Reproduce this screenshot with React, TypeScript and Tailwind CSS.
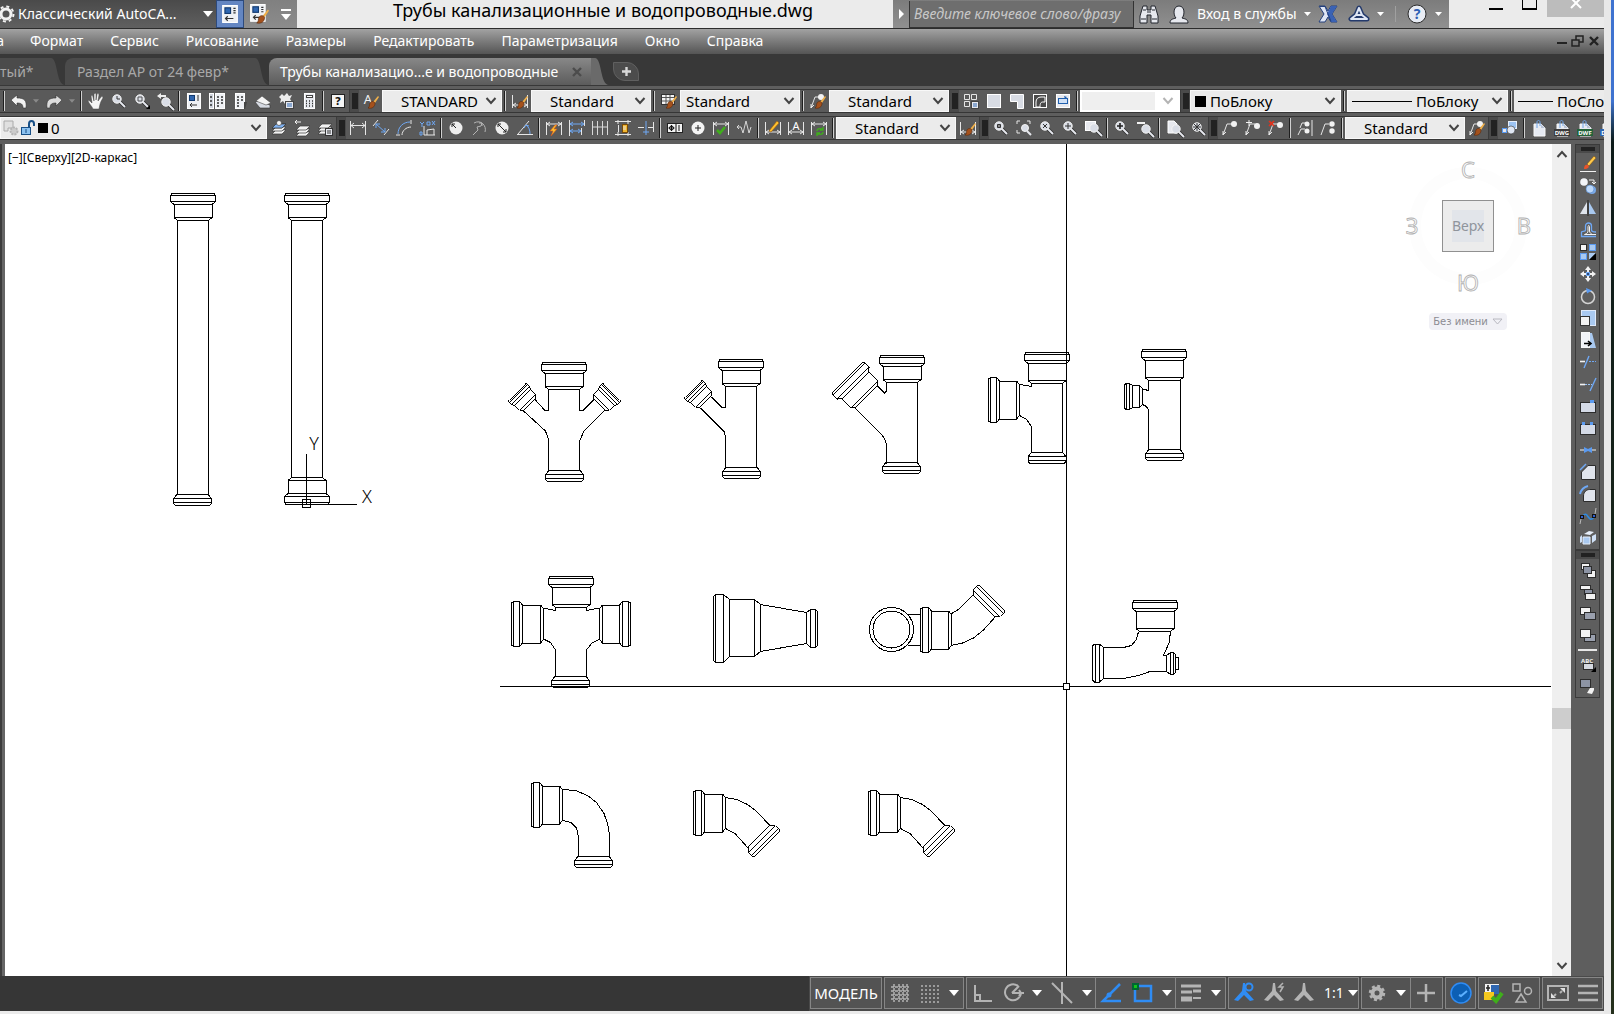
import type { ReactNode } from "react";
import { clsx } from "clsx";

/* ---------- shared icon pieces, all on a 16x16 grid ---------- */

const Lens = ({ x = 6, y = 6 }: { x?: number; y?: number }) => (
    <g>
        <path d={`M${x + 3} ${y + 3}l5 5`} stroke="#2b2b2b" strokeWidth="3.4" />
        <path d={`M${x + 3} ${y + 3}l5 5`} stroke="#e6e8ee" strokeWidth="2" />
        <circle cx={x} cy={y} r="4.2" fill="#d9dde6" stroke="#f4f4f4" />
    </g>
);

const Brush = () => (
    <g>
        <path d="M10 9l5-6 1 1-4 6z" fill="#f0b04a" />
        <path d="M7 10c1-2 4-2 5 0 0 4-3 6-7 5 2-1 1-3 2-5z" fill="#a4511c" stroke="#5c2a0c" strokeWidth="0.6" />
    </g>
);

const Dim = ({ y = 11 }: { y?: number }) => (
    <path d={`M.5 2v13M15.5 2v13M1 ${y}h14M4 ${y - 2}l-3 2 3 2M12 ${y - 2}l3 2-3 2`} stroke="#e6e6e6" fill="none" />
);

const Leader = () => (
    <path d="M1 15l4-11h5M1 15l0-4M1 15l3-3" stroke="#e6e6e6" fill="none" />
);

const Sheet = ({ label, c = "#3c3c3c" }: { label?: string; c?: string }) => (
    <g>
        <path d="M3 4h7l4 4v8H3z" fill="#e6eaf2" stroke="#f8f8f8" />
        <path d="M10 4v4h4" fill="#b9c3d6" />
        <path d="M6 8V2c0-2 3-2 3 0v4" stroke="#6fa4e8" fill="none" />
        {label && <rect x="0" y="9" width="16" height="7" fill={c} />}
        {label && <text x="8" y="15" fontSize="6" fontWeight="700" textAnchor="middle" fill="#fff">{label}</text>}
    </g>
);

const Stack = () => (
    <g fill="#f2f2f2" stroke="#3a3a3a" strokeWidth="0.7">
        <path d="M1 14l4-4h10l-4 4z" />
        <path d="M1 11l4-4h10l-4 4z" />
        <path d="M1 8l4-4h10l-4 4z" />
    </g>
);

const box = (x: number, y: number, w: number, h: number, fill = "#e4e8f0", stroke = "#2c2c2c") => (
    <rect x={x} y={y} width={w} height={h} fill={fill} stroke={stroke} />
);

const icons: Record<string, ReactNode> = {
    undo: <path d="M0 7l6-5v3c7 0 10 2 9 10h-3c0-4-2-5-6-5v3z" fill="#f2f2f2" stroke="#333" strokeWidth="0.6" />,
    redo: <path d="M16 7l-6-5v3C3 5 0 7 1 15h3c0-4 2-5 6-5v3z" fill="#dcdcdc" stroke="#333" strokeWidth="0.6" />,
    hand: <path d="M5 16c-1-3-4-5-5-8 1-1 2 0 4 2L3 3c1-1 2 0 2 1l1 4V1c1-1 2-1 2 0v6l1-6c1-1 2 0 2 1l-1 6 3-4c1-1 2 0 2 1-2 3-3 5-4 11z" fill="#f4f4f4" stroke="#444" strokeWidth="0.5" />,
    zoomTime: <g><Lens /><path d="M6 3v3h3" stroke="#333" fill="none" /></g>,
    zoomWin: <g><Lens /><path d="M4 4h4v4H4z" fill="none" stroke="#555" /><path d="M16 12v4h-4z" fill="#000" /></g>,
    zoomPrev: <g><Lens x={9} y={9} /><path d="M0 3l4-3v2h5v2H4v2z" fill="#eee" /></g>,
    props: <g>{box(1.5, 0.5, 13, 15, "#eef0f4", "#fff")}{box(3.5, 2.5, 5, 5, "#2f66b0", "#123a70")}<path d="M11 3h2M11 5h2M11 7h2M4 12h7M6 10l-2 2 2 2" stroke="#333" fill="none" /></g>,
    design: <g>{box(0.5, 0.5, 4, 15, "#cfd4de", "#fff")}{box(6.5, 0.5, 9, 15, "#eef0f4", "#fff")}<path d="M1 4h2M1 8h2M1 12h2M8 4h2M12 4h2M8 7h2M12 7h2M8 10h2M12 10h2M8 13h2" stroke="#333" strokeWidth="1.6" /></g>,
    palettes: <g>{box(3.5, 0.5, 9, 15, "#eef0f4", "#fff")}<path d="M5 4h2M9 4h2M5 7h2M9 7h2M5 10h2M5 13h2" stroke="#333" strokeWidth="1.6" /><path d="M12 9h3l-2 7h-1z" fill="#444" /></g>,
    sheets: <g><path d="M0 9l4-1 11 4v3H5z" fill="#d6dae2" stroke="#333" strokeWidth="0.6" /><path d="M1 8l6-5 9 7-5 2z" fill="#f4f4f4" stroke="#444" strokeWidth="0.6" /></g>,
    markup: <g><path d="M1 4l3-3 2 2 3-3 2 3 3-1-2 4 2 3-4-1-3 3-2-3-3 2 1-4z" fill="#eee" />{box(7.5, 8.5, 8, 7, "#e6e8ee", "#444")}<path d="M9 11h5M9 13h5" stroke="#2f66b0" /></g>,
    calc: <g>{box(3.5, 0.5, 10, 15, "#e6e8ee", "#fff")}{box(5.5, 2.5, 6, 2, "#fff", "#444")}<path d="M5 8h1M8 8h1M11 8h1M5 10.500h1M8 10.500h1M11 10.500h1M5 13h1M8 13h1M11 13h1" stroke="#333" strokeWidth="1.400" /></g>,
    help: <g>{box(1.5, 1.5, 13, 13, "#f4f4f4", "#222")}<text x="8" y="12" fontSize="11" fontWeight="800" textAnchor="middle" fill="#111">?</text></g>,
    textStyle: <g><text x="5" y="11" fontSize="13" textAnchor="middle" fill="#f2f2f2">A</text><Brush /></g>,
    dimStyle: <g><Dim y={12} /><Brush /></g>,
    tableStyle: <g>{box(0.5, 1.5, 13, 10, "#f4f4f4", "#333")}<path d="M1 4.500h12M1 8h12M5 2v9M9 2v9" stroke="#555" /><Brush /></g>,
    leaderStyle: <g><Leader /><circle cx="11" cy="4" r="3" fill="#f2f2f2" /><Brush /></g>,
    vpGroup: <g fill="none" stroke="#e6e6e6"><path d="M1.500 1.500h5v5h-5zM8.500 1.500h5v5h-5zM1.500 8.500h5v5h-5z" />{box(8.5, 8.5, 7, 7, "#e6e8ee", "#444")}<path d="M10 11h4M10 13h4" stroke="#2f66b0" /></g>,
    vpOne: <g>{box(1.5, 1.5, 13, 13, "#d8dce4", "#fff")}</g>,
    vpPoly: <path d="M1.500 1.500h13v14h-6v-7h-7z" fill="#d8dce4" stroke="#fff" />,
    vpObj: <g>{box(1.5, 1.5, 13, 13, "#4a4a4a", "#fff")}<path d="M4 14V9c0-3 2-5 5-5h4v5h-2c-2 0-3 1-3 5z" fill="none" stroke="#fff" /></g>,
    vpClip: <g>{box(1.5, 1.5, 13, 13, "#e6e8ee", "#fff")}{box(3.5, 5.5, 9, 5, "#cfe0f6", "#1f5fae")}<path d="M9 3l3 1-2 2" fill="#1f5fae" /></g>,
    layerMake: <g><Stack /><path d="M1 8l4-4h10l-4 4z" fill="#7fb0ee" stroke="#333" strokeWidth="0.7" /><circle cx="8" cy="3" r="2.500" fill="#f4f4f4" stroke="#333" strokeWidth="0.6" /></g>,
    layerPrev: <g transform="translate(1 2)"><Stack /><path d="M0 0h6M2-2L0 0l2 2" stroke="#f2f2f2" fill="none" /></g>,
    layerState: <g><Stack />{box(8.5, 8.5, 7, 7, "#e6e8ee", "#333")}<path d="M10 11h4M10 13h4" stroke="#333" /></g>,
    dLin: <path d="M.5 1v14M15.500 1v14M1 5.500h14M4 3L1 5.500 4 8M12 3l3 2.500L12 8" stroke="#e6e6e6" fill="none" />,
    dAli: <g fill="none" stroke="#6fa8f4"><path d="M3 4l9 8M3 8V4h4M12 8v4H8" /><path d="M5 0L0 6M16 9l-5 6" stroke="#e6e6e6" /></g>,
    dArc: <g fill="none"><path d="M2 14C2 7 7 2 14 2" stroke="#6fa8f4" /><path d="M6 15c0-4 4-8 9-8M0 15h4M15 0v4" stroke="#e6e6e6" /></g>,
    dOrd: <g fill="none" stroke="#e6e6e6"><path d="M5 15V6M15 15V9L8 10v5M5 15h11" /><path d="M1 2l2 2 2-2M3 4v3M8 2h3v3H8zM13 1l3 4M16 1l-3 4M1 12h2v3H1z" stroke="#6fa8f4" /></g>,
    dRad: <g><circle cx="8" cy="8" r="6.500" fill="#eee" /><path d="M8 8L4 4M4 7V4h3" stroke="#222" fill="none" /></g>,
    dJog: <g fill="none" stroke="#b4b4b4"><path d="M3 3c7-4 13 3 11 9" /><path d="M2 15l5-5-1-3 4-1 1-3M8 3h3v3" /></g>,
    dDia: <g><circle cx="8" cy="8" r="6.500" fill="#eee" /><path d="M4 4l8 8M4 7V4h3M12 9v3H9" stroke="#222" fill="none" /></g>,
    dAng: <g fill="none"><path d="M0 14.500h16M1 14L12 1" stroke="#e6e6e6" /><path d="M9 5c3 2 4 5 4 9M7 8l2-3 3 1" stroke="#6fa8f4" /></g>,
    dQuick: <g><Dim y={4} /><path d="M9 5l-5 6h3l-2 5 6-7H8l3-4z" fill="#ffc12e" stroke="#d9541a" strokeWidth="0.6" /></g>,
    dBase: <g fill="none" stroke="#6fa8f4"><path d="M1 4h13M1 11h10M4 2L1 4l3 2M12 2l3 2-3 2M4 9l-3 2 3 2M9 9l3 2-3 2" /><path d="M.5 0v16M15.500 0v6M12.500 8v7" stroke="#e6e6e6" /></g>,
    dCont: <path d="M.5 1v14M5.500 1v14M10.500 1v14M15.500 1v14M1 7h15" stroke="#d8d8d8" fill="none" />,
    dSpace: <g><path d="M0 1.500h16M0 14.500h16M3 0v4M13 0v4M3 12v4M13 12v4" stroke="#e6e6e6" />{box(7.5, 4.5, 5, 8, "#f0b62e", "#7a4b08")}<path d="M3.500 5v7M8 7h3M8 9h3" stroke="#e6e6e6" /></g>,
    dBreak: <g fill="none"><path d="M0 7.500h6M10 7.500h6M15.500 2v10" stroke="#e6e6e6" /><path d="M8 1v14M5 12h6" stroke="#6fa8f4" /></g>,
    tol: <g>{box(0.5, 3.5, 15, 9, "#f4f4f4", "#222")}<circle cx="4.500" cy="8" r="2" fill="none" stroke="#111" /><path d="M1.500 8h6M4.500 5v6M9 4v8M12 5v6" stroke="#111" /></g>,
    center: <g><circle cx="8" cy="8" r="6.500" fill="#f4f4f4" /><path d="M5 8h6M8 5v6" stroke="#222" /></g>,
    inspect: <g><Dim y={4} /><path d="M4 10l3 3 5-6" stroke="#3fae1b" strokeWidth="2.600" fill="none" /></g>,
    jogLine: <path d="M1 7h4l2 6 3-12 3 12 2-6M3 5L1 7l2 2" stroke="#d8d8d8" fill="none" />,
    dEdit: <g><Dim y={12} /><path d="M4 11l8-10 2 2-8 9z" fill="#ffc12e" stroke="#a05a08" strokeWidth="0.6" /></g>,
    dText: <g><Dim y={12} /><text x="8" y="10" fontSize="11" textAnchor="middle" fill="#fff">A</text></g>,
    dUpd: <g><Dim y={4} /><path d="M6 11c0-3 5-3 6-1M12 12c0 3-5 3-6 1M12 7v3h-3M6 16v-3h3" stroke="#3fae1b" fill="none" strokeWidth="1.400" /></g>,
    zW: <g><Lens /><path d="M4.500 4.500h3v3h-3z" fill="#888" stroke="#333" /></g>,
    zDyn: <g><path d="M1 4V1h3M11 1h3v3M1 10v3h3" stroke="#e6e6e6" fill="none" /><circle cx="9" cy="8" r="3.500" fill="#d9dde6" stroke="#f4f4f4" /><path d="M11 11l4 4" stroke="#e6e8ee" strokeWidth="2" /></g>,
    zScale: <g><Lens /><path d="M4 4l4 4M8 4L4 8" stroke="#333" /></g>,
    zCen: <g><Lens /><path d="M3 6h6M6 3v6" stroke="#333" /></g>,
    zObj: <g>{box(0.5, 1.5, 10, 9, "#e6e8ee", "#fff")}<Lens x={9} y={8} /></g>,
    zIn: <g><Lens /><path d="M3 6h6M6 3v6" stroke="#222" strokeWidth="1.600" /></g>,
    zOut: <g><path d="M0 3h8" stroke="#f2f2f2" strokeWidth="2" /><Lens x={9} y={9} /></g>,
    zAll: <g><path d="M2 1h6l3 3v9H2z" fill="#e6e8ee" stroke="#fff" /><Lens x={10} y={9} /></g>,
    zExt: <g><Lens x={8} y={7} /><path d="M4 7h8M8 3v8M5 4l6 6M11 4l-6 6" stroke="#333" /></g>,
    ml: <g><Leader /><circle cx="12" cy="4" r="3" fill="#f2f2f2" /></g>,
    mlAdd: <g><Leader /><circle cx="12" cy="6" r="3" fill="#f2f2f2" /><path d="M1 2.500h6M4 0v6" stroke="#f2f2f2" /></g>,
    mlDel: <g><Leader /><circle cx="12" cy="5" r="3" fill="#f2f2f2" /><path d="M1 1l5 5M6 1L1 6" stroke="#e0331d" strokeWidth="1.600" /></g>,
    mlAlign: <g><path d="M1 15l3-6h4M3 8l2-5h4" stroke="#e6e6e6" fill="none" /><circle cx="10" cy="4" r="2.500" fill="#f2f2f2" /><circle cx="10" cy="11" r="2.500" fill="#f2f2f2" /><path d="M15 0v16" stroke="#e6e6e6" /></g>,
    mlJoin: <g><path d="M1 15l4-11h4" stroke="#e6e6e6" fill="none" /><circle cx="12" cy="4" r="2.700" fill="#f2f2f2" /><circle cx="12" cy="11" r="2.700" fill="#f2f2f2" /></g>,
    insert: <g>{box(6.5, 1.5, 8, 7, "#9cc3f2", "#e6eefa")}<circle cx="9" cy="10" r="4" fill="#dfe6f2" stroke="#333" strokeWidth="0.600" />{box(0.5, 8.5, 4, 4, "#e6e8ee", "#5a9af0")}</g>,
    attach: <Sheet />,
    dwg: <Sheet label="DWG" />,
    dwf: <Sheet label="DWF" c="#24633a" />,
    dgn: <Sheet label="DGN" c="#2f66b0" />,
    /* modify toolbar */
    erase: <g><path d="M0 15.500h16" stroke="#f2f2f2" /><path d="M7 8l7-8 2 2-7 8z" fill="#ffc94a" stroke="#7a4b08" strokeWidth="0.500" /><path d="M4 13c0-4 2-5 4-4 2 2 0 4-4 4z" fill="#e8532a" /></g>,
    copy: <g><circle cx="4" cy="4" r="3.800" fill="#f2f4f8" /><circle cx="12" cy="12" r="4" fill="#79a9e8" /><circle cx="10" cy="11" r="4" fill="#bcd7f8" stroke="#4d83c8" strokeWidth="0.600" /><path d="M9 2h5v4M12 4l2 2 2-2" stroke="#f2f2f2" fill="none" /></g>,
    mirror: <g><path d="M7 2v12H0z" fill="#dfe4ec" /><path d="M9 2v12h7z" fill="#a9c9f0" /><path d="M8 0v16" stroke="#222" /></g>,
    offset: <g fill="none"><path d="M16 14.500H1.500V10c0-1 4 0 4-2V4c0-4 6-4 6 0v4c0 2 2 2 4.500 2" stroke="#6fa8f4" strokeWidth="1.300" /><path d="M16 12.500H4.500c3-1 3.500-2 3.500-4V5c0-2 1.500-2 1.500 0v4c0 2 2 3 3 3.500" stroke="#f2f2f2" /></g>,
    array: <g>{box(0.5, 0.5, 6, 6, "#f4f4f4")}{box(9.5, 0.5, 6, 6, "#a9c9f0", "#5a9af0")}{box(0.5, 9.5, 6, 6, "#a9c9f0", "#5a9af0")}<path d="M9 9h7l-7 7z" fill="#a9c9f0" /><path d="M16 9v7H9z" fill="#000" /></g>,
    move: <g><path d="M8 0l3 4H9v2H7V4H5zM8 16l3-4H9v-2H7v2H5zM0 8l4-3v2h2v2H4v2zM16 8l-4-3v2h-2v2h2v2z" fill="#f2f2f2" />{box(6.5, 6.5, 3, 3, "#2c4a78", "#6fa8f4")}</g>,
    rotate: <g><circle cx="8" cy="9" r="6.500" fill="none" stroke="#d4d4d4" strokeWidth="1.500" /><path d="M6 0l6 2.500-5 3z" fill="#5a9af0" /></g>,
    scale: <g>{box(1.5, 0.5, 14, 15, "#a9c9f0", "#dfeafa")}{box(0.5, 6.5, 9, 9, "#f2f2f2", "#333")}</g>,
    stretch: <g><path d="M9 1h3l4 15H9z" fill="#a9c9f0" />{box(1.5, 0.5, 8, 15, "#f2f4f8", "#f8f8f8")}<path d="M4 11.500h7M8 9l3 2.500L8 14" stroke="#000" strokeWidth="1.600" fill="none" /></g>,
    trim: <g fill="none"><path d="M0 7.500h5" stroke="#f2f2f2" strokeWidth="1.600" /><path d="M4 14L9 2" stroke="#6fa8f4" strokeWidth="1.400" /><path d="M9 7.500h7" stroke="#6fa8f4" strokeDasharray="2 1" /></g>,
    extend: <g fill="none"><path d="M0 8.500h5" stroke="#f2f2f2" strokeWidth="1.600" /><path d="M10 15l6-13" stroke="#6fa8f4" strokeWidth="1.400" /><path d="M5 8.500h7" stroke="#9cc3f2" strokeDasharray="2 1" /></g>,
    breakPt: <g>{box(0.5, 4.5, 15, 10, "#d4dae6")}<path d="M10 2h4v3h-4z" fill="#5a9af0" /></g>,
    breakTwo: <g>{box(0.5, 4.5, 15, 10, "#d4dae6")}<path d="M2 2h3v3H2zM10 2h3v3h-3z" fill="#5a9af0" /></g>,
    join: <g><path d="M0 8h16" stroke="#f2f2f2" /><path d="M4 5l4 2 4-2v6l-4-2-4 2z" fill="#5a9af0" /></g>,
    chamfer: <g><path d="M1.500 15.500V8L8 1.500h7.500v14z" fill="#e0e4ec" stroke="#2c2c2c" /><path d="M0 6l6-6" stroke="#6fa8f4" strokeWidth="1.500" /></g>,
    fillet: <g><path d="M3.500 15.500V10c0-4 3-6.500 6-6.500h6v12z" fill="#e0e4ec" stroke="#2c2c2c" /><path d="M0 8c1-4 4-7 8-8" stroke="#6fa8f4" strokeWidth="2" fill="none" /></g>,
    blend: <g fill="none"><path d="M0 16l1-5M16 0l-1 6" stroke="#bbb" /><path d="M2 9c6-9 6 8 12 0" stroke="#2f8ae0" strokeWidth="1.600" />{box(0.5, 7.500, 3, 3, "#2f5fd0", "#111")}{box(12.5, 6.500, 3, 3, "#2f5fd0", "#111")}</g>,
    explode: <g><path d="M4 4l5-3 5 1-4 3z" fill="#e6eefa" /><path d="M3 7h7v7H3z" fill="#a9c9f0" stroke="#e6eefa" /><path d="M12 6l4-2v6l-4 3zM0 7l2-2v7l-2 1z" fill="#cfe0f6" /></g>,
    orderFront: <g>{box(1.5, 1.5, 8, 6, "#f2f2f2")}{box(7.5, 8.5, 8, 7, "#f2f2f2")}{box(3.5, 4.5, 8, 7, "#8d94a4")}</g>,
    orderBack: <g>{box(4.5, 5.5, 8, 5, "#8d94a4")}{box(0.5, 1.5, 10, 4, "#f2f2f2")}{box(5.5, 9.5, 10, 6, "#f2f2f2")}</g>,
    orderAbove: <g>{box(0.5, 1.5, 10, 7, "#f2f2f2")}{box(4.5, 6.5, 11, 7, "#9aa0ae")}</g>,
    orderUnder: <g>{box(4.5, 6.5, 11, 7, "#9aa0ae")}{box(0.5, 1.5, 10, 8, "#f2f2f2")}</g>,
    orderText: <g>{box(3.5, 7.5, 10, 6, "#d4d8e0")}<text x="7" y="7" fontSize="6" fontWeight="700" textAnchor="middle" fill="#f2f2f2">ABC</text><path d="M16 11v5h-5z" fill="#000" /></g>,
    orderHatch: <g>{box(0.5, 1.5, 10, 8, "#8d94a4")}<path d="M7 15l3-5h4v2l-2 4z" fill="#f2f2f2" /></g>,
};

const Icon = ({ name, size = 16 }: { name: string; size?: number }) => (
    <svg width={size} height={size} viewBox="0 0 16 16" className="shrink-0 overflow-visible">{icons[name]}</svg>
);

const Chevron = ({ className }: { className?: string }) => (
    <svg width="12" height="12" viewBox="0 0 12 12" className={clsx("shrink-0", className)}>
        <path d="M1.500 3L6 8l4.500-5" fill="none" stroke="currentColor" strokeWidth="2" />
    </svg>
);

const Caret = ({ label, className }: { label: string; className?: string }) => (
    <button aria-label={label} className={clsx("flex shrink-0 items-center justify-center", className)}>
        <svg width="10" height="6" viewBox="0 0 10 6"><path d="M0 0h10L5 6z" fill="currentColor" /></svg>
    </button>
);

/* ---------- toolbar parts ---------- */

const Sep = () => (
    <span className="flex w-[6px] shrink-0 justify-center self-stretch py-px">
        <span className="w-px bg-[#1e1e1e]" />
        <span className="w-px bg-[#d0d0d0]" />
    </span>
);

const Grip = () => (
    <span className="flex w-[10px] shrink-0 items-center justify-center self-stretch border-l border-[#3c3c3c] bg-[#4a4a4a]">
        <span className="h-4 w-[6px] bg-[radial-gradient(#b0b0b0_34%,#222_36%)] bg-[length:2px_2px]" />
    </span>
);

const Tools = ({ names }: { names: string[] }) => (
    <>
        {names.map((name, i) => {
            if (name === "|") return <Sep key={i} />;
            return (
                <button key={i} aria-label={name} className="flex w-[23px] shrink-0 items-center justify-center self-stretch hover:bg-[#6e6e6e]">
                    <Icon name={name} />
                </button>
            );
        })}
    </>
);

type ComboProps = { label: string; value: string; className?: string; selectClass?: string; children?: ReactNode };

const Combo = ({ label, value, className = "w-[120px]", selectClass = "pl-[18px]", children }: ComboProps) => (
    <div className={clsx("relative flex h-[22px] shrink-0 items-center border border-[#f8f8f8] bg-[#ebebeb] text-[#444]", className)}>
        {children}
        <select aria-label={label} className={clsx("h-full min-w-0 flex-1 appearance-none text-[15px] leading-5 text-black outline-none", selectClass)}>
            <option>{value}</option>
        </select>
        <Chevron className="pointer-events-none absolute right-1" />
    </div>
);

/* ---------- title bar ---------- */

const TitleBar = () => (
    <header className="flex h-7 shrink-0 bg-[#ebebeb] text-white">
        <div className="flex w-[216px] shrink-0 items-center bg-linear-to-b from-[#4a4a4a] to-[#606060] pb-px">
            <svg width="15" height="18" viewBox="3 0 15 18" className="shrink-0">
                <circle cx="9" cy="9" r="5" fill="none" stroke="#f2f2f2" strokeWidth="3" />
                <circle cx="9" cy="9" r="7.500" fill="none" stroke="#f2f2f2" strokeWidth="2" strokeDasharray="3 2.900" />
            </svg>
            <span className="ml-[3px] flex-1 text-[14px] leading-5 whitespace-nowrap">Классический AutoCA...</span>
            <Caret label="Рабочее пространство" className="w-4" />
        </div>
        <button aria-label="Свойства" className="flex w-[28px] shrink-0 items-center justify-center border border-[#2d4a7c] bg-[#6486c2]">
            <Icon name="props" size={18} />
        </button>
        <div className="flex w-[53px] shrink-0 items-center bg-linear-to-b from-[#808080] to-[#8c8c8c]">
            <button aria-label="Копировать свойства" className="flex w-[30px] items-center justify-center">
                <svg width="20" height="20" viewBox="0 0 18 18">
                    <g>{icons.props}</g>
                    <g transform="translate(2 2)"><Brush /></g>
                </svg>
            </button>
            <button aria-label="Настройка панели" className="flex w-[23px] flex-col items-center gap-[3px]">
                <span className="h-[2px] w-[10px] bg-white" />
                <svg width="10" height="6" viewBox="0 0 10 6"><path d="M0 0h10L5 6z" fill="#fff" /></svg>
            </button>
        </div>
        <h1 className="min-w-0 flex-1 pl-4 text-center text-[18px] leading-5 whitespace-nowrap text-black">Трубы канализационные и водопроводные.dwg</h1>
        <div className="flex w-[556px] shrink-0 items-center bg-linear-to-b from-[#7c7c7c] to-[#909090]">
            <button aria-label="Свернуть поиск" className="flex w-4 shrink-0 items-center justify-center">
                <svg width="5" height="10" viewBox="0 0 5 10"><path d="M0 0l5 5-5 5z" fill="#fff" /></svg>
            </button>
            <input
                aria-label="Поиск"
                placeholder="Введите ключевое слово/фразу"
                className="h-[27px] w-[225px] shrink-0 border border-t-0 border-[#333] bg-[#6e6e6e] pl-1 text-[14px] italic placeholder-[#c8c8c8] outline-none"
            />
            <button aria-label="Найти" className="flex w-[30px] shrink-0 items-center justify-center">
                <svg width="20" height="20" viewBox="0 0 20 20">
                    <path d="M4 2h4v4h4V2h4l3 10v7h-7v-8H8v8H1v-7z" fill="#e6e8ee" stroke="#23262e" />
                    <path d="M4 6h3M13 6h3M2 15h5M13 15h5M8 8h4" stroke="#23262e" />
                </svg>
            </button>
            <button className="flex w-[137px] shrink-0 items-center gap-2 pl-[5px] text-[14px] leading-5">
                <svg width="20" height="20" viewBox="0 0 20 20" className="shrink-0">
                    <path d="M1 19c0-4 3-4 6-5-3-3-3-12 3-12s6 9 3 12c3 1 6 1 6 5z" fill="#e6e8ee" stroke="#23262e" />
                </svg>
                <span className="whitespace-nowrap">Вход в службы</span>
            </button>
            <Caret label="Меню входа" className="w-[12px] [&>svg]:w-[7px]" />
            <button aria-label="Exchange" className="flex w-[30px] shrink-0 items-center justify-center">
                <svg width="20" height="18" viewBox="0 0 20 18">
                    <path d="M1 1h6l3 5 3-5h6l-5 8 5 8h-6l-3-5-3 5H1l5-8z" fill="#dfe6f4" stroke="#24407c" />
                    <path d="M13 1h6l-5 8 5 8h-6l-4-8z" fill="#3a62b4" />
                    <path d="M2 1.500h5l6 15" fill="none" stroke="#24407c" />
                </svg>
            </button>
            <button aria-label="Autodesk 360" className="flex w-[32px] shrink-0 items-center justify-center">
                <svg width="22" height="20" viewBox="0 0 22 20" fill="none" strokeLinejoin="round" strokeLinecap="round">
                    <path d="M11 4L8 11l-5 4h16l-5-4zM8 11h6" stroke="#243a6c" strokeWidth="5" />
                    <path d="M11 4L8 11l-5 4h16l-5-4zM8 11h6" stroke="#dfe6f4" strokeWidth="2" />
                </svg>
            </button>
            <Caret label="Меню Autodesk 360" className="w-[10px] [&>svg]:w-[7px]" />
            <span className="mx-[10px] h-4 w-px bg-[#a0a0a0]" />
            <button aria-label="Справка" className="flex w-[22px] shrink-0 items-center justify-center">
                <svg width="20" height="20" viewBox="0 0 20 20">
                    <circle cx="10" cy="10" r="9" fill="#e8ecf4" stroke="#2c2c2c" />
                    <text x="10" y="15" fontSize="14" fontWeight="700" textAnchor="middle" fill="#2f5fb4">?</text>
                </svg>
            </button>
            <Caret label="Меню справки" className="flex-1 [&>svg]:w-[7px]" />
        </div>
        <div className="flex w-[155px] shrink-0 items-start justify-end text-black">
            <button aria-label="Свернуть" className="mt-2 mr-[19px] h-[2px] w-[14px] bg-black" />
            <button aria-label="Развернуть" className="mr-[10px] h-[10px] w-[15px] border border-t-0 border-b-2 border-black" />
            <button aria-label="Закрыть" className="flex h-[17px] w-[57px] justify-center bg-[#bcbcbc] text-white">
                <svg width="12" height="9" viewBox="0 0 12 9"><path d="M1-2l10 10M11-2L1 8" stroke="#fff" strokeWidth="2" /></svg>
            </button>
        </div>
    </header>
);

const MENU = ["Формат", "Сервис", "Рисование", "Размеры", "Редактировать", "Параметризация", "Окно", "Справка"];

const MenuBar = () => (
    <nav className="flex h-[26px] shrink-0 items-center border-t border-[#2c2c2c] bg-linear-to-b from-[#a2a2a2] to-[#555] pb-[2px] text-[14px] leading-5 text-white">
        <button className="flex w-[4px] justify-end">а</button>
        <div className="flex flex-1 gap-[27px] pl-[26px]">
            {MENU.map((m) => <button key={m}>{m}</button>)}
        </div>
        <div className="flex items-center gap-1 pr-[3px] text-[#1c1c1c]">
            <button aria-label="Свернуть окно" className="mt-1 h-[2px] w-[10px] bg-[#222]" />
            <button aria-label="Восстановить окно">
                <svg width="13" height="12" viewBox="0 0 13 12" fill="none" stroke="#222" strokeWidth="1.500"><path d="M1 5h7v6H1zM5 5V1h7v6H8" /></svg>
            </button>
            <button aria-label="Закрыть окно">
                <svg width="13" height="10" viewBox="0 0 13 10"><path d="M2 1l8 8M10 1L2 9" stroke="#222" strokeWidth="2.400" /></svg>
            </button>
        </div>
    </nav>
);

/* ---------- file tabs ---------- */

const TabEdge = ({ color }: { color: string }) => (
    <svg width="18" height="27" viewBox="0 0 18 27" className="shrink-0">
        <path d="M0 0h4c7 0 5 27 14 27H0z" fill={color} />
    </svg>
);

const FileTabs = () => (
    <div className="flex h-8 shrink-0 items-end bg-[#383838] pb-px text-[14px] leading-5">
        <button className="flex h-[27px] w-[47px] shrink-0 items-center bg-[#4b4b4b] text-[#a8a8a8]">тый*</button>
        <TabEdge color="#4b4b4b" />
        <button className="flex h-[27px] w-[186px] shrink-0 items-center rounded-tl-lg bg-[#4b4b4b] pl-3 text-[#a8a8a8]">Раздел АР от 24 февр*</button>
        <TabEdge color="#4b4b4b" />
        <div className="flex h-[27px] w-[322px] shrink-0 items-center rounded-tl-lg bg-linear-to-b from-[#888] to-[#5c5c5c] text-white">
            <button className="flex-1 pl-[11px] text-left whitespace-nowrap">Трубы канализацио...е и водопроводные</button>
            <button aria-label="Закрыть вкладку" className="mr-2">
                <svg width="11" height="10" viewBox="0 0 11 10"><path d="M1 1l8 8M9 1L1 9" stroke="#4c4c4c" strokeWidth="2.400" /></svg>
            </button>
        </div>
        <TabEdge color="#6a6a6a" />
        <button aria-label="Новый чертеж" className="mb-1 ml-1 flex h-[19px] w-[26px] items-center justify-center rounded-tr-xl rounded-bl-xl border border-[#606060] bg-[#4c4c4c]">
            <svg width="9" height="9" viewBox="0 0 9 9"><path d="M0 4.500h9M4.500 0v9" stroke="#d8d8d8" strokeWidth="2.400" /></svg>
        </button>
    </div>
);

/* ---------- toolbars ---------- */

const toolbarRow = "flex h-6 shrink-0 items-center overflow-hidden border-y border-[#363636] bg-[#5a5a5a]";

const Toolbars = () => (
    <div className="flex shrink-0 flex-col gap-[3px] bg-[#5e5e5e] pt-[3px] pb-1">
        <div className={toolbarRow}>
            <span className="w-px shrink-0" />
            <Sep />
            <Tools names={["undo"]} />
            <Caret label="Отменить список" className="w-[12px] text-[#8a8a8a] [&>svg]:w-[6px]" />
            <Tools names={["redo"]} />
            <Caret label="Повторить список" className="w-[13px] text-[#8a8a8a] [&>svg]:w-[6px]" />
            <Tools names={["|", "hand", "zoomTime", "zoomWin", "zoomPrev", "|", "props", "design", "palettes", "sheets", "markup", "calc", "|", "help"]} />
            <Grip />
            <Tools names={["textStyle"]} />
            <Combo label="Стиль текста" value="STANDARD" />
            <Tools names={["|", "dimStyle"]} />
            <Combo label="Размерный стиль" value="Standard" />
            <Tools names={["|", "tableStyle"]} />
            <Combo label="Стиль таблиц" value="Standard" selectClass="pl-[5px]" />
            <Tools names={["|", "leaderStyle"]} />
            <Combo label="Стиль мультивыноски" value="Standard" />
            <Grip />
            <Tools names={["vpGroup", "vpOne", "vpPoly", "vpObj", "vpClip", "|"]} />
            <div className="relative flex h-[22px] w-[100px] shrink-0 items-center border-2 border-white bg-white text-[#b4b4b4]">
                <select aria-label="Масштаб видового экрана" disabled className="h-full w-[73px] appearance-none bg-[#efefef]"><option></option></select>
                <Chevron className="pointer-events-none absolute right-1" />
            </div>
            <Grip />
            <Combo label="Цвет" value="ПоБлоку" className="w-[151px]" selectClass="pl-1">
                <span className="ml-1 size-[11px] bg-black" />
            </Combo>
            <Sep />
            <Combo label="Тип линии" value="ПоБлоку" className="w-[161px]" selectClass="pl-1">
                <span className="ml-1 h-px w-[60px] bg-black" />
            </Combo>
            <Sep />
            <div className="flex h-[22px] min-w-0 flex-1 items-center overflow-hidden bg-[#ebebeb]">
                <span className="ml-1 h-px w-[35px] shrink-0 bg-black" />
                <select aria-label="Вес линии" className="w-[100px] shrink-0 appearance-none pl-1 text-[15px] leading-5 text-black"><option>ПоСлою</option></select>
            </div>
        </div>
        <div className={toolbarRow}>
            <Combo label="Слой" value="0" className="w-[267px]" selectClass="pl-[3px]">
                <svg width="16" height="16" viewBox="0 0 16 16" className="ml-[2px] shrink-0">
                    <path d="M1 1h9v7H5v3H1z" fill="#e0e0e0" stroke="#aaa" />
                    <circle cx="11" cy="11" r="3.500" fill="#ccc" stroke="#b4b4b4" strokeWidth="2" strokeDasharray="2 1" />
                </svg>
                <svg width="16" height="16" viewBox="0 0 16 16" className="ml-[1px] shrink-0">
                    <path d="M9 7V4c0-4 5-4 5 0v2" fill="none" stroke="#174f86" strokeWidth="2" />
                    {box(1.5, 7.5, 9, 7, "#8cc2f0", "#174f86")}
                    <path d="M6 9v4" stroke="#174f86" />
                </svg>
                <span className="ml-[2px] size-[10px] bg-black" />
            </Combo>
            <Tools names={["layerMake", "layerPrev", "layerState"]} />
            <Grip />
            <Tools names={["dLin", "dAli", "dArc", "dOrd", "|", "dRad", "dJog", "dDia", "dAng", "|", "dQuick", "dBase", "dCont", "dSpace", "dBreak", "|", "tol", "center", "inspect", "jogLine", "|", "dEdit", "dText", "dUpd", "|"]} />
            <Combo label="Текущий размерный стиль" value="Standard" />
            <Tools names={["dimStyle"]} />
            <Grip />
            <Tools names={["zW", "zDyn", "zScale", "zCen", "zObj", "|", "zIn", "zOut", "|", "zAll", "zExt"]} />
            <Grip />
            <Tools names={["ml", "mlAdd", "mlDel", "|", "mlAlign", "mlJoin", "|"]} />
            <Combo label="Стиль выноски" value="Standard" />
            <Tools names={["leaderStyle"]} />
            <Grip />
            <Tools names={["insert", "|", "attach", "dwg", "dwf", "dgn"]} />
        </div>
    </div>
);

/* ---------- drawing ---------- */

type Part = { x: number; y: number; r?: number };

/* bell socket, open end at the origin, pipe runs along +y */
const Socket = ({ x, y, r = 0, d = 31 }: Part & { d?: number }) => (
    <path
        transform={`translate(${x} ${y}) rotate(${r})`}
        d={`M-21 0H21L22.500 2V8L19 11V${d - 3}L15.500 ${d}H-15.500L-19 ${d - 3}V11L-22.500 8V2ZM-22.500 2H22.500M-22.500 8H22.500M-19 11H19M-19 ${d - 3}H19`}
    />
);

const SmallSocket = ({ x, y, r = 0 }: Part) => (
    <path
        transform={`translate(${x} ${y}) rotate(${r})`}
        d="M-12 0H12L13 2V5L11 8V15L8 18H-8L-11 15V8L-13 5V2ZM-13 2H13M-13 5H13M-11 8H11M-11 15H11"
    />
);

const Cap = ({ x, y, r = 0 }: Part) => (
    <path
        transform={`translate(${x} ${y}) rotate(${r})`}
        d="M-17 0H17L19 2V7L15.500 11H-15.500L-19 7V2ZM-19 3H19M-19 7H19"
    />
);

const Bend45 = () => (
    <g>
        <Socket x={693.5} y={813} r={-90} d={32} />
        <path d="M725.500 797.500L737 799.500L747.500 804.500L756 811L770.500 826M725.500 828.500L735 833.500L748.500 848.500" />
        <Cap x={767} y={844} r={135} />
    </g>
);

const Drawing = () => (
    <svg viewBox="5 144 1547 832" preserveAspectRatio="xMinYMin slice" className="size-full" fill="none" stroke="#000" shapeRendering="crispEdges">
        {/* straight pipes */}
        <Socket x={193} y={193.5} d={27} />
        <path d="M177.500 220V494M208.500 220V494" />
        <Cap x={192.5} y={505.5} r={180} />
        <Socket x={307} y={193.5} d={27} />
        <path d="M291.500 220V477M322.500 220V477" />
        <Socket x={307} y={504.5} r={180} d={27} />

        {/* UCS marker */}
        <path d="M306.500 454V504.500H357M302.500 499.500h8v8h-8z" />
        <g fill="#000" stroke="none" fontSize="18" fontWeight="300" textAnchor="middle" shapeRendering="auto">
            <text x="314" y="450">Y</text>
            <text x="367" y="503">X</text>
        </g>

        {/* double wye */}
        <Socket x={564} y={362.5} d={27} />
        <path d="M548.500 389V410.500H545L535 399.500M579.500 389V410.500H583L594 399.500M523 410.500L545.500 431L548.500 439.500V471M604.500 410.500L584 431L579.500 441V471" />
        <Cap x={564.5} y={481.5} r={180} />
        <SmallSocket x={517} y={392} r={-45} />
        <SmallSocket x={612} y={392} r={45} />

        {/* wye */}
        <Socket x={741} y={359.5} d={27} />
        <path d="M725.500 386V407.500H722L711.500 397M700.500 408L724 431.500L725.500 437V468M756.500 386V468" />
        <Cap x={741.5} y={478.5} r={180} />
        <SmallSocket x={693} y={389} r={-45} />

        {/* equal wye */}
        <Socket x={902} y={355.5} d={27} />
        <path d="M886.500 382V391L884.500 393L877.500 386M855.500 408.500L881.500 434.500Q886 440 886.500 446V464M917.500 382V464" />
        <Cap x={901.5} y={473.5} r={180} />
        <Socket x={847.5} y={377.5} r={-45} d={27} />

        {/* tees */}
        <Socket x={1047} y={352.5} />
        <path d="M1031.500 383V386.500L1019.500 384.500M1019.500 415.500L1026.500 419.500L1031.500 426.500V453M1062.500 383V453" />
        <Cap x={1047} y={463.5} r={180} />
        <Socket x={988.5} y={400} r={-90} />

        <Socket x={1164} y={349.5} />
        <path d="M1148.500 380V390.500L1142.500 389M1142.500 404.500L1146.500 406.500L1148.500 410V450M1180.500 380V450" />
        <Cap x={1164.5} y={460.5} r={180} />
        <SmallSocket x={1124.5} y={396.5} r={-90} />

        {/* cross */}
        <Socket x={571} y={576.5} />
        <path d="M555.500 607V610.500L543.500 608M586.500 607V610.500L599.500 608M543.500 639L550.500 642.500L555.500 650V677M599.500 639L591.500 643.500L586.500 650V677" />
        <Cap x={570.5} y={687.5} r={180} />
        <Socket x={511.5} y={624} r={-90} d={32} />
        <Socket x={630.5} y={624} r={90} />

        {/* reducer */}
        <path d="M715.500 594.500H723.500L729.500 599.500H754.500L760.500 604.500L806.500 612.500L810.500 609.500H815.500L817.500 611.500V645.500L815.500 647.500H810.500L806.500 643.500L760.500 651.500L754.500 656.500H729.500L723.500 662.500H715.500L713.500 660.500V596.500Z" />
        <path d="M715.500 594V662M723.500 594V662M729.500 599V657M754.500 599V657M760.500 604V652M806.500 612V644M810.500 609V648M815.500 609V648" />

        {/* swivel bend */}
        <circle cx="891.500" cy="629.500" r="22" />
        <circle cx="891.500" cy="629.500" r="18.500" />
        <path d="M908 614.500H920M908 645.500H920" />
        <Socket x={920.5} y={630} r={-90} />
        <path d="M951 614L959 609L973.500 594.500M951 645.500L962.500 643L973.500 638L983.500 630L996 616" />
        <Cap x={992} y={598} r={45} />

        {/* outlet bend */}
        <Socket x={1155} y={600.5} />
        <path d="M1138.500 632L1136 640L1131.500 645.500L1123.500 647.500H1103M1170.500 632L1169 643L1163.500 655.500H1167M1103 678.500H1123.500L1138.500 675.500L1150 671.500H1167" />
        <Cap x={1092.5} y={663} r={-90} />
        <path d="M1170.500 652.500H1173.500L1175.500 654.500V672.500L1173.500 674.500H1170.500L1166.500 671.500V655.500ZM1170.500 652V675M1173.500 652V675M1175.500 657.500H1178.500V669.500H1175.500" />

        {/* bends */}
        <Socket x={531.5} y={805} r={-90} />
        <path d="M562.500 789.500L575.500 790.500L587.500 795.500L596.500 802.500L604 813.500L607.500 823.500L609.500 835V857M562.500 820.500L571 822.500L576.500 828L578.500 837V857" />
        <Cap x={593.5} y={867.5} r={180} />
        <Bend45 />
        <g transform="translate(175 0)"><Bend45 /></g>

        {/* crosshair */}
        <path d="M1066.500 144V976M500 686.500H1551" />
        <path d="M1063.500 683.500h6v6h-6z" fill="#fff" />
    </svg>
);

const ViewCube = () => (
    <div className="absolute top-[14px] right-[18px] flex w-[132px] flex-col items-center">
        <svg width="132" height="136" viewBox="0 0 132 136" fill="none">
            <circle cx="66" cy="68" r="53" stroke="#fdfdfd" strokeWidth="12" />
            <rect x="40.500" y="42.500" width="51" height="51" fill="#ececec" stroke="#909090" />
            <rect x="50" y="52" width="32" height="32" fill="#e2e5ea" />
            <g textAnchor="middle">
                <text x="66" y="73" fontSize="14" fill="#8f949c">Верх</text>
                <g fontSize="22" fill="#fafafa" stroke="#b0b0b0" strokeWidth="0.800">
                    <text x="66" y="20">С</text>
                    <text x="10" y="76">З</text>
                    <text x="122" y="76">В</text>
                    <text x="66" y="133">Ю</text>
                </g>
            </g>
        </svg>
        <button className="mt-[19px] flex h-[17px] items-center gap-1 rounded-sm bg-[#f1f1f6] px-1 font-['DejaVu_Sans',sans-serif] text-[10px] text-[#8c8c92]">
            Без имени
            <svg width="11" height="7" viewBox="0 0 11 7"><path d="M1 1h9L5.500 6z" fill="none" stroke="#b8b8c0" /></svg>
        </button>
    </div>
);

const Viewport = () => (
    <main className="relative min-w-0 flex-1 overflow-hidden bg-white">
        <Drawing />
        <p className="absolute top-[6px] left-[3px] text-[12px] leading-4 text-black">[−][Сверху][2D-каркас]</p>
        <ViewCube />
    </main>
);

const ScrollBar = () => (
    <div className="flex w-[19px] shrink-0 flex-col items-center bg-[#efefef] text-[#444]">
        <button aria-label="Вверх" className="flex h-5 items-center"><Chevron className="rotate-180" /></button>
        <div className="flex w-full flex-1 flex-col">
            <span className="flex-[544]" />
            <span className="h-[21px] bg-[#cdcdcd]" />
            <span className="flex-[227]" />
        </div>
        <button aria-label="Вниз" className="flex h-5 items-center"><Chevron /></button>
    </div>
);

/* ---------- right dock ---------- */

const MODIFY = ["erase", "copy", "mirror", "offset", "array", "move", "rotate", "scale", "stretch", "trim", "extend", "breakPt", "breakTwo", "join", "chamfer", "fillet", "blend", "explode"];
const ORDER = ["orderFront", "orderBack", "orderAbove", "orderUnder", "-", "orderText", "orderHatch"];

const DockBar = ({ names }: { names: string[] }) => (
    <div className="flex flex-col items-center border border-[#3a3a3a]">
        <span className="flex h-2 w-full items-center justify-center bg-[#4a4a4a]">
            <span className="h-[4px] w-[14px] bg-[radial-gradient(#b0b0b0_34%,#222_36%)] bg-[length:2px_2px]" />
        </span>
        {names.map((n) => {
            if (n === "-") return <span key={n} className="my-[2px] h-[2px] w-[19px] bg-[#e8e8e8]" />;
            return (
                <button key={n} aria-label={n} className="flex h-[22px] w-full items-center justify-center">
                    <Icon name={n} />
                </button>
            );
        })}
    </div>
);

const Dock = () => (
    <aside className="flex w-[33px] shrink-0 flex-col bg-[#5e5e5e] pr-[4px] pl-[4px]">
        <DockBar names={MODIFY} />
        <DockBar names={ORDER} />
    </aside>
);

/* ---------- status bar ---------- */

const StatusIcon = ({ label, children, className = "w-[30px]" }: { label: string; children: ReactNode; className?: string }) => (
    <button aria-label={label} className={clsx("flex shrink-0 items-center justify-center", className)}>
        <svg width="22" height="22" viewBox="0 0 22 22" fill="none" stroke="#b4b4b4" strokeWidth="2">{children}</svg>
    </button>
);

const StatusCaret = ({ label, className = "w-[18px]" }: { label: string; className?: string }) => <Caret label={label} className={clsx("text-white", className)} />;

const Panel = ({ className, children }: { className: string; children: ReactNode }) => (
    <div className={clsx("flex h-[32px] shrink-0 items-center border border-[#868686] bg-[#535353]", className)}>{children}</div>
);

const Divider = () => <span className="w-px shrink-0 self-stretch bg-[#868686]" />;

const person = "M10 1h2l1 8 8 9-4 1-6-6-6 6-4-1 8-9z";

const StatusBar = () => (
    <footer className="flex h-[35px] shrink-0 justify-end bg-[#363636] text-white">
        <div className="flex items-start gap-[2px] bg-[#4a4a4a] px-px pt-px">
            <Panel className="w-[72px]"><button className="w-full text-center text-[15px] leading-5">МОДЕЛЬ</button></Panel>
            <Panel className="w-[80px]">
                <StatusIcon label="Сетка"><path d="M5 2v18M10 2v18M14 2v18M18 2v18M2 5h18M2 9h18M2 13h18M2 17h18" strokeWidth="1.500" strokeDasharray="3 1" /></StatusIcon>
                <StatusIcon label="Привязка к сетке"><path d="M2 4h18M2 8h18M2 12h18M2 16h18M2 20h18" strokeDasharray="2 2" strokeWidth="1.500" /></StatusIcon>
                <StatusCaret label="Параметры сетки" />
            </Panel>
            <Panel className="w-[260px]">
                <StatusIcon label="Орто"><path d="M4 3v16h17M4 13h5v6" /></StatusIcon>
                <StatusIcon label="Полярное отслеживание" className="w-[32px]"><path d="M16 4a8 8 0 1 0 3 7M10 11h12M10 11l7-7M17 8l2 3-2 3" /></StatusIcon>
                <StatusCaret label="Углы" className="w-[15px]" />
                <StatusIcon label="Изометрия" className="w-[35px]"><path d="M11-1v24M1 1l20 20" /></StatusIcon>
                <StatusCaret label="Плоскости" className="w-[16px]" />
                <Divider />
                <StatusIcon label="Отслеживание"><path d="M20 2L3 19h18" stroke="#2f8cf4" strokeWidth="2.500" /><circle cx="9" cy="13" r="2.500" fill="#2f8cf4" stroke="none" /></StatusIcon>
                <StatusIcon label="Объектная привязка" className="w-[32px]"><path d="M4 4h16v15H4z" stroke="#2f8cf4" strokeWidth="2.500" /><path d="M2 2h5v5H2z" fill="#12c41a" stroke="#063" /></StatusIcon>
                <StatusCaret label="Режимы привязки" className="w-[17px]" />
                <Divider />
                <StatusIcon label="Веса линий"><path d="M1 4h20M1 10h11M13 9h8" strokeWidth="3" /><path d="M1 17h11" strokeWidth="5" /><path d="M13 16h8" strokeWidth="2" /></StatusIcon>
                <StatusCaret label="Параметры весов" className="w-[19px]" />
            </Panel>
            <Panel className="w-[131px]">
                <StatusIcon label="Видимость аннотаций"><path d={person} fill="#2f8cf4" stroke="none" /><circle cx="16" cy="5" r="3.500" stroke="#2f8cf4" /></StatusIcon>
                <StatusIcon label="Автомасштаб"><path d={person} fill="#b4b4b4" stroke="none" /><path d="M20 1l-4 4h4l-3 5" strokeWidth="1.500" /></StatusIcon>
                <StatusIcon label="Масштаб аннотаций"><path d={person} fill="#b4b4b4" stroke="none" /></StatusIcon>
                <button className="ml-[5px] flex items-center gap-1 text-[14px] leading-5">
                    1:1
                    <svg width="10" height="6" viewBox="0 0 10 6"><path d="M0 0h10L5 6z" fill="#fff" /></svg>
                </button>
            </Panel>
            <Panel className="w-[82px]">
                <StatusIcon label="Рабочее пространство"><circle cx="11" cy="11" r="4.500" strokeWidth="4" /><circle cx="11" cy="11" r="7" strokeWidth="2.500" strokeDasharray="3 2.500" /></StatusIcon>
                <StatusCaret label="Список пространств" />
                <Divider />
                <StatusIcon label="Монитор аннотаций"><path d="M11 2v18M2 11h18" strokeWidth="2.500" /></StatusIcon>
            </Panel>
            <Panel className="w-[31px] justify-center">
                <StatusIcon label="Аппаратное ускорение" className="w-[29px]"><circle cx="11" cy="11" r="10" fill="#0c5fb4" stroke="#2f8cf4" strokeWidth="1.500" /><path d="M9 13l2 1 6-5" stroke="#5cb0ff" /></StatusIcon>
            </Panel>
            <Panel className="w-[62px]">
                <StatusIcon label="Доверенный DWG" className="w-[28px]">
                    <g stroke="none"><path d="M3 2h14v8H3z" fill="#f2f2f2" /><path d="M9 3h8v9H9z" fill="#2f66b0" /><path d="M2 10h10v8H2z" fill="#f4c81e" /></g>
                    <path d="M4 6h4M6 3v6" stroke="#222" strokeWidth="1.500" />
                    <path d="M10 15l4 4 6-8" stroke="#3fae1b" strokeWidth="4" />
                </StatusIcon>
                <StatusIcon label="Изоляция объектов"><path d="M2 2h7v7H2zM10 12l5 8H5z" strokeWidth="1.500" /><circle cx="17" cy="9" r="3.500" strokeWidth="1.500" /></StatusIcon>
            </Panel>
            <Panel className="w-[61px]">
                <StatusIcon label="Очистить экран"><path d="M1 4h20v14H1z" /><path d="M13 6h5v5zM4 11l5 5H4z" fill="#e0e0e0" stroke="none" /><path d="M15 9l-2 2M7 14l2-2" /></StatusIcon>
                <StatusIcon label="Адаптация"><path d="M1 4h20M1 11h20M1 18h20" strokeWidth="2.500" /></StatusIcon>
            </Panel>
        </div>
    </footer>
);

export default function App() {
    return (
        <div className="flex h-screen overflow-hidden bg-[#ebebeb] font-['Noto_Sans','Open_Sans',sans-serif]">
            <div className="flex min-w-0 flex-1 flex-col pb-[3px]">
                <TitleBar />
                <MenuBar />
                <FileTabs />
                <Toolbars />
                <div className="flex min-h-0 flex-1">
                    <span className="w-[5px] shrink-0 border-l-2 border-[#3c3c3c] bg-[#666]" />
                    <Viewport />
                    <ScrollBar />
                    <Dock />
                </div>
                <StatusBar />
            </div>
            <div className="w-[7px] shrink-0 bg-[#e8e8e8]" />
            <div className="w-[3px] shrink-0 bg-linear-to-b from-[#3f73d0] from-10% via-[#0c1a18] via-14% to-[#24301c]" />
        </div>
    );
}
